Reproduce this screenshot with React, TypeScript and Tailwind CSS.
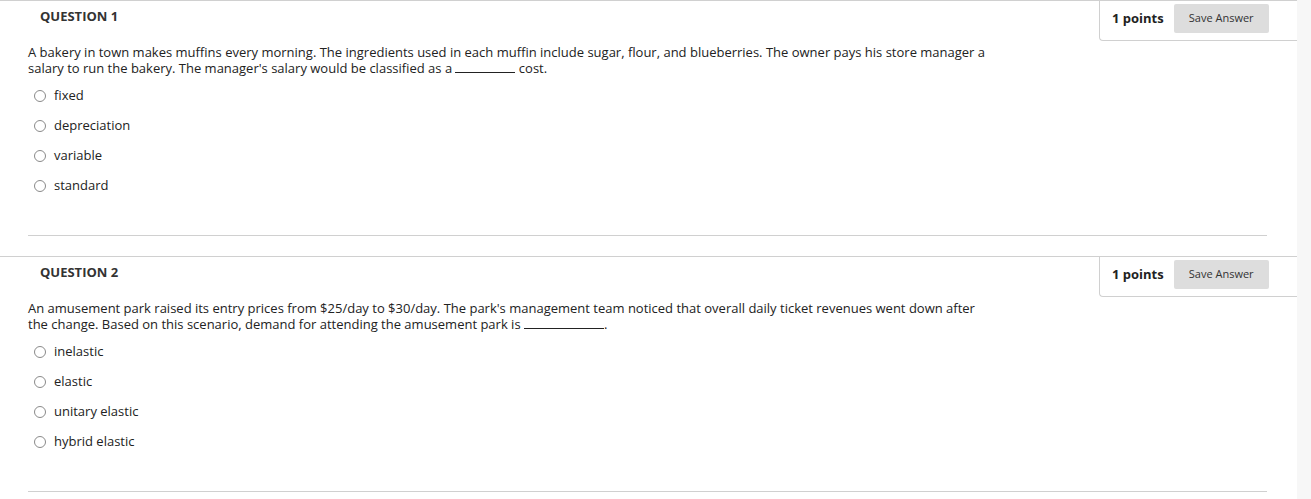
import React from "react";

type Q = {
  n: number;
  lines: React.ReactNode[];
  options: string[];
};

const Blank = ({ w }: { w: string }) => (
  <span className={`inline-block border-b border-[#222] align-baseline ${w}`} />
);

const QUESTIONS: Q[] = [
  {
    n: 1,
    lines: [
      "A bakery in town makes muffins every morning. The ingredients used in each muffin include sugar, flour, and blueberries. The owner pays his store manager a",
      <>
        salary to run the bakery. The manager's salary would be classified as a <Blank w="w-[60px]" /> cost.
      </>,
    ],
    options: ["fixed", "depreciation", "variable", "standard"],
  },
  {
    n: 2,
    lines: [
      "An amusement park raised its entry prices from $25/day to $30/day. The park's management team noticed that overall daily ticket revenues went down after",
      <>
        the change. Based on this scenario, demand for attending the amusement park is <Blank w="w-[80px]" />.
      </>,
    ],
    options: ["inelastic", "elastic", "unitary elastic", "hybrid elastic"],
  },
];

function Question({ q }: { q: Q }) {
  return (
    <div className="h-[256px] border-t border-[#d0d0d0]">
      <div className="flex items-start justify-between">
        <h3 className="pl-[40px] pt-[6px] text-[13px] font-bold leading-[18px] text-[#333]">
          QUESTION {q.n}
        </h3>
        <div className="flex h-[40px] w-[198px] items-start gap-[10px] rounded-bl-[4px] border-b border-l border-[#d0d0d0] pl-[12px] pt-[3px]">
          <span className="pt-[5px] text-[13px] font-bold leading-[18px] text-[#222]">1 points</span>
          <button className="h-[29px] w-[95px] rounded-[2px] bg-[#dddddd] text-[11px] text-[#333]">
            Save Answer
          </button>
        </div>
      </div>
      <div className="mt-[3px] pl-[28px] text-[13px] leading-[16px] text-[#222]">
        {q.lines.map((l, i) => (
          <div key={i} className="whitespace-nowrap">
            {l}
          </div>
        ))}
      </div>
      <ul className="mt-[5px] pl-[34px]">
        {q.options.map((o) => (
          <li key={o} className="flex h-[30px] items-center gap-[8px] text-[13px] text-[#222]">
            <span className="h-[12px] w-[12px] rounded-full border border-[#8a8a8a] bg-white" />
            {o}
          </li>
        ))}
      </ul>
      <div className="ml-[28px] mt-[34px] w-[1239px] border-t border-[#d0d0d0]" />
    </div>
  );
}

export default function App() {
  return (
    <div className="flex min-h-[499px] bg-white" style={{ fontFamily: '"Open Sans", sans-serif' }}>
      <div className="w-[1297px]">
        {QUESTIONS.map((q) => (
          <Question key={q.n} q={q} />
        ))}
      </div>
      <div className="flex-1 bg-[#f7f7f7]" />
    </div>
  );
}
